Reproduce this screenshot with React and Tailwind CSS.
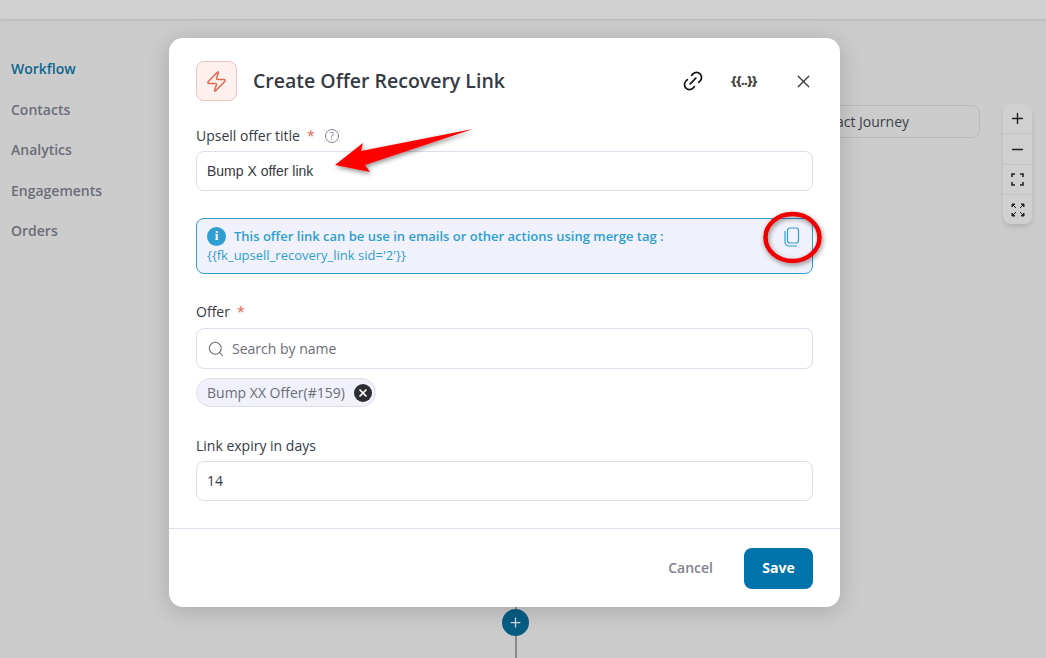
import { Link2, Search, X, Plus, Minus, Zap } from 'lucide-react';

const NAV_ITEMS = ['Workflow', 'Contacts', 'Analytics', 'Engagements', 'Orders'];

function Required() {
  return <span className="text-[#e2674f] ml-[7px]">*</span>;
}

function ZoomControls() {
  return (
    <div className="absolute left-[1003px] top-[104px] w-[29px] h-[120px] rounded-lg bg-[#d0d0d0] flex flex-col shadow-md divide-y divide-[#c4c4c4]">
      <div className="h-[30px] flex items-center justify-center"><Plus size={17} className="text-[#222]" /></div>
      <div className="h-[31px] flex items-center justify-center"><Minus size={17} className="text-[#222]" /></div>
      <div className="h-[30px] flex items-center justify-center">
        <svg width="13" height="13" viewBox="0 0 13 13" fill="none" stroke="#222" strokeWidth="1.6">
          <path d="M1 4V1h3M9 1h3v3M12 9v3H9M4 12H1V9" />
        </svg>
      </div>
      <div className="h-[29px] flex items-center justify-center">
        <svg width="14" height="14" viewBox="0 0 14 14" fill="#222" stroke="#222" strokeWidth="1">
          <path d="M1 1h3L1 4zM13 1v3l-3-3zM1 13v-3l3 3zM13 13h-3l3-3z" />
          <path d="M2 2l3 3M12 2L9 5M2 12l3-3M12 12L9 9" />
        </svg>
      </div>
    </div>
  );
}

function Annotations() {
  return (
    <svg className="absolute left-0 top-0 pointer-events-none" width="1046" height="658" viewBox="0 0 1046 658">
      <defs>
        <filter id="soft" x="-30%" y="-30%" width="160%" height="160%">
          <feDropShadow dx="1" dy="2" stdDeviation="2.5" floodColor="#000" floodOpacity="0.45" />
        </filter>
      </defs>
      <polygon points="335,165 363,143 361,151 473,129 365,165 370,172" fill="#fe0000" filter="url(#soft)" />
      <ellipse cx="792.5" cy="237.5" rx="27" ry="23.5" fill="none" stroke="#ee0000" strokeWidth="4.5" filter="url(#soft)" />
    </svg>
  );
}

function OfferModal() {
  return (
    <div className="absolute left-[169px] top-[38px] w-[671px] h-[569px] bg-white rounded-[14px] flex flex-col shadow-[0_4px_24px_rgba(0,0,0,0.18)]">
      <div className="px-[27px] pt-[23px] flex-1">
        {/* Header */}
        <div className="flex items-center h-10">
          <div className="w-[41px] h-10 rounded-lg bg-[#fdf0ee] border border-[#eec3bc] flex items-center justify-center">
            <Zap size={23} strokeWidth={1.5} className="text-[#e2674f]" />
          </div>
          <h2 className="ml-4 text-[19.5px] font-semibold text-[#353a45]">Create Offer Recovery Link</h2>
          <div className="ml-auto flex items-center">
            <Link2 size={24} strokeWidth={1.7} className="text-[#111] -rotate-45 mr-[26px]" />
            <span className="text-[12.5px] font-extrabold tracking-[-0.5px] text-[#444] mr-[36px]">{'{{..}}'}</span>
            <X size={21} strokeWidth={1.4} className="text-[#333] mr-[-1px]" />
          </div>
        </div>

        {/* Title */}
        <label className="mt-[25px] flex items-center h-[20px] text-sm font-medium text-[#353a45]">
          Upsell offer title<Required />
          <span className="ml-[10px] w-[14px] h-[14px] rounded-full border border-[#82838e] text-[#82838e] text-[10px] flex items-center justify-center">?</span>
        </label>
        <div className="mt-[5px] h-10 rounded-lg border border-[#dedeea] px-[10px] flex items-center text-sm text-[#353a45] font-['Liberation_Sans',sans-serif]">
          Bump X offer link
        </div>

        {/* Merge tag info */}
        <div className="mt-[27px] h-14 rounded-lg border border-[#2e9fd0] bg-[#f0f1fa] pl-[10px] pr-3 pt-[7px] flex justify-between text-[#2e9fd0] text-[13px] font-semibold leading-[20px]">
          <div>
            <div className="flex items-center">
              <span className="w-[19px] h-[19px] rounded-full bg-[#2e9fd0] text-white text-[13px] font-bold flex items-center justify-center mr-[8px] font-['Liberation_Serif',serif]">i</span>
              This offer link can be use in emails or other actions using merge tag :
            </div>
            <div className="font-normal -mt-[1px]">{"{{fk_upsell_recovery_link sid='2'}}"}</div>
          </div>
          <svg className="mt-[1px] mr-[-1px]" width="18" height="20" viewBox="0 0 18 20" fill="none" stroke="#2e9fd0" strokeWidth="1.2">
            <rect x="4.5" y="1" width="11" height="15" rx="2.5" />
            <path d="M2 4v11a4 4 0 0 0 4 4h8" />
          </svg>
        </div>

        {/* Offer */}
        <label className="mt-[28px] block h-[20px] text-sm font-medium text-[#353a45]">
          Offer<Required />
        </label>
        <div className="mt-[6px] h-[41px] rounded-lg border border-[#dedeea] px-[10px] flex items-center text-sm text-[#6b6e78]">
          <Search size={18} strokeWidth={1.4} className="text-[#6b6e78] mr-[7px]" />
          Search by name
        </div>
        <div className="mt-[9px] h-[29px] w-[180px] rounded-full border border-[#dedeea] bg-[#f0f1fa] pl-[10px] flex items-center text-sm text-[#6b6e78]">
          Bump XX Offer(#159)
          <span className="ml-[9px] w-[18px] h-[18px] rounded-full bg-[#2c2c33] flex items-center justify-center">
            <X size={12} strokeWidth={3.5} className="text-white" />
          </span>
        </div>

        {/* Expiry */}
        <label className="mt-[29px] block h-[20px] text-sm font-medium text-[#353a45]">Link expiry in days</label>
        <div className="mt-[5px] h-10 rounded-lg border border-[#dedeea] px-[10px] flex items-center text-sm text-[#353a45]">
          14
        </div>
      </div>

      {/* Footer */}
      <div className="h-[79px] border-t border-[#dedeea] px-[27px] flex items-center justify-end">
        <span className="text-sm font-semibold text-[#82838e] mr-[31px]">Cancel</span>
        <button className="w-[69px] h-[41px] rounded-lg bg-[#0073aa] text-white text-sm font-bold">Save</button>
      </div>
    </div>
  );
}

export default function App() {
  return (
    <div className="relative w-[1046px] h-[658px] overflow-hidden bg-[#cccccc] font-['Open_Sans',sans-serif]">
      <div className="h-[19px] bg-[#d0d0d0] shadow-[0_1px_3px_rgba(0,0,0,0.12)]" />

      <nav className="pl-[11px] pt-[30px] flex flex-col text-sm font-semibold text-[#6b6e78]">
        {NAV_ITEMS.map((item) => (
          <div key={item} className={`h-[40.5px] flex items-center ${item === 'Workflow' ? 'text-[#0b668f]' : ''}`}>
            {item}
          </div>
        ))}
      </nav>

      <div className="absolute left-[700px] top-[105px] w-[280px] h-[33px] rounded-lg border border-[#b9b9c2] flex items-center justify-center text-sm text-[#3c3f48]">
        View Contact Journey
      </div>
      <ZoomControls />

      <div className="absolute left-[515px] top-[600px] w-[2px] h-[58px] bg-[#8a8a8a]" />
      <div className="absolute left-[502px] top-[609px] w-[27px] h-[27px] rounded-full bg-[#075e85] flex items-center justify-center">
        <Plus size={15} strokeWidth={2} className="text-[#d5dde2]" />
      </div>

      <OfferModal />
      <Annotations />
    </div>
  );
}
